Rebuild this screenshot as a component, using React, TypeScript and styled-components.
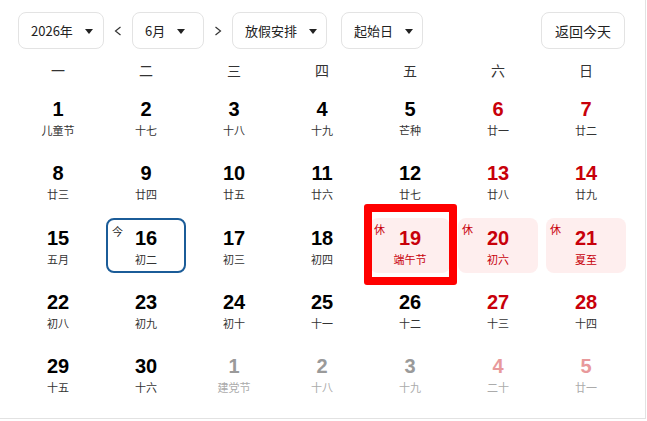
import React from 'react';
import styled, { createGlobalStyle } from 'styled-components';

const GlobalStyle = createGlobalStyle`
  html, body {
    margin: 0;
    padding: 0;
    background: #fff;
  }
  body {
    font-family: "Noto Sans CJK SC", "Noto Sans", sans-serif;
    color: #333;
  }
`;

type DayKind = 'normal' | 'weekend' | 'next' | 'nextWeekend';

interface Day {
  num: number;
  lunar: string;
  kind: DayKind;
  today?: boolean;
  rest?: boolean;
  marked?: boolean;
}

const d = (num: number, lunar: string, kind: DayKind = 'normal', extra: Partial<Day> = {}): Day => ({
  num,
  lunar,
  kind,
  ...extra,
});

const WEEKDAYS = ['一', '二', '三', '四', '五', '六', '日'];

const DAYS: Day[] = [
  d(1, '儿童节'), d(2, '十七'), d(3, '十八'), d(4, '十九'), d(5, '芒种'), d(6, '廿一', 'weekend'), d(7, '廿二', 'weekend'),
  d(8, '廿三'), d(9, '廿四'), d(10, '廿五'), d(11, '廿六'), d(12, '廿七'), d(13, '廿八', 'weekend'), d(14, '廿九', 'weekend'),
  d(15, '五月'), d(16, '初二', 'normal', { today: true }), d(17, '初三'), d(18, '初四'),
  d(19, '端午节', 'weekend', { rest: true, marked: true }), d(20, '初六', 'weekend', { rest: true }), d(21, '夏至', 'weekend', { rest: true }),
  d(22, '初八'), d(23, '初九'), d(24, '初十'), d(25, '十一'), d(26, '十二'), d(27, '十三', 'weekend'), d(28, '十四', 'weekend'),
  d(29, '十五'), d(30, '十六'), d(1, '建党节', 'next'), d(2, '十八', 'next'), d(3, '十九', 'next'), d(4, '二十', 'nextWeekend'), d(5, '廿一', 'nextWeekend'),
];

const numColor: Record<DayKind, string> = {
  normal: '#000',
  weekend: '#c8000a',
  next: '#9a9a9a',
  nextWeekend: '#e8999b',
};

const Page = styled.div`
  width: 645px;
  height: 418px;
  border-right: 1px solid #e2e2e2;
  border-bottom: 1px solid #e2e2e2;
  box-sizing: content-box;
`;

const Toolbar = styled.div`
  display: flex;
  align-items: center;
  padding: 12px 20px 0 18px;
  height: 37px;
`;

const SelectButton = styled.button<{ $w: number }>`
  display: flex;
  align-items: center;
  justify-content: flex-start;
  gap: 12px;
  width: ${p => p.$w}px;
  height: 37px;
  padding: 0 0 0 12px;
  border: 1px solid #e3e3e3;
  border-radius: 8px;
  background: #fff;
  font-family: "Noto Sans CJK SC", sans-serif;
  font-size: 13px;
  color: #222;
  box-sizing: border-box;
  flex-shrink: 0;
`;

const Caret = styled.span`
  width: 0;
  height: 0;
  border-left: 4px solid transparent;
  border-right: 4px solid transparent;
  border-top: 5px solid #222;
  margin-top: 1px;
`;

const ArrowButton = styled.button`
  width: 28px;
  height: 37px;
  display: flex;
  align-items: center;
  justify-content: center;
  border: none;
  background: transparent;
  padding: 0;
  color: #333;
`;

const Spacer = styled.div<{ $w: number }>`
  width: ${p => p.$w}px;
  flex-shrink: 0;
`;

const TodayButton = styled.button`
  margin-left: auto;
  height: 37px;
  padding: 0 13px;
  border: 1px solid #e3e3e3;
  border-radius: 8px;
  background: #fff;
  font-family: "Noto Sans CJK SC", sans-serif;
  font-size: 14px;
  color: #222;
`;

const Grid = styled.div`
  display: grid;
  grid-template-columns: repeat(7, 80px);
  column-gap: 8px;
  padding: 0 0 0 18px;
`;

const WeekRow = styled(Grid)`
  margin-top: 9px;
  height: 24px;
  align-items: center;
`;

const WeekLabel = styled.div`
  text-align: center;
  font-size: 14px;
  line-height: 24px;
  color: #333;
`;

const DayGrid = styled(Grid)`
  margin-top: 7px;
  grid-auto-rows: 55px;
  row-gap: 9.25px;
`;

const Cell = styled.div<{ $today?: boolean; $rest?: boolean }>`
  position: relative;
  display: flex;
  flex-direction: column;
  align-items: center;
  gap: 2px;
  box-sizing: border-box;
  border-radius: 8px;
  background: ${p => (p.$rest ? '#feeeee' : 'transparent')};
  border: ${p => (p.$today ? '2px solid #1b5c98' : 'none')};
  padding-top: ${p => (p.$today ? 7 : 9)}px;
`;

const DayNum = styled.div<{ $color: string }>`
  font-family: "Liberation Sans", Arial, sans-serif;
  font-weight: 700;
  font-size: 20px;
  line-height: 22px;
  color: ${p => p.$color};
`;

const Lunar = styled.div<{ $color: string }>`
  font-size: 11px;
  line-height: 16px;
  color: ${p => p.$color};
`;

const Tag = styled.span<{ $color: string }>`
  position: absolute;
  top: 4px;
  left: 4px;
  font-size: 11px;
  line-height: 14px;
  color: ${p => p.$color};
`;

const Mark = styled.div`
  position: absolute;
  top: -14px;
  left: -6px;
  right: -7px;
  bottom: -12px;
  border: 8px solid #ff0000;
  border-radius: 3px;
  pointer-events: none;
`;

const Chevron = ({ dir }: { dir: 'left' | 'right' }) => (
  <svg width="8" height="10" viewBox="0 0 8 10" fill="none">
    <path
      d={dir === 'left' ? 'M6.5 1 L1.5 5 L6.5 9' : 'M1.5 1 L6.5 5 L1.5 9'}
      stroke="#333"
      strokeWidth="1.2"
      strokeLinejoin="miter"
    />
  </svg>
);

const lunarColor = (day: Day) => {
  if (day.rest) return '#c8000a';
  if (day.kind === 'next' || day.kind === 'nextWeekend') return '#ababab';
  return '#333';
};

export default function App() {
  return (
    <>
      <GlobalStyle />
      <Page>
        <Toolbar>
          <SelectButton $w={86}>2026年<Caret /></SelectButton>
          <ArrowButton><Chevron dir="left" /></ArrowButton>
          <SelectButton $w={72}>6月<Caret /></SelectButton>
          <ArrowButton><Chevron dir="right" /></ArrowButton>
          <SelectButton $w={95}>放假安排<Caret /></SelectButton>
          <Spacer $w={14} />
          <SelectButton $w={82}>起始日<Caret /></SelectButton>
          <TodayButton>返回今天</TodayButton>
        </Toolbar>

        <WeekRow>
          {WEEKDAYS.map(w => (
            <WeekLabel key={w}>{w}</WeekLabel>
          ))}
        </WeekRow>

        <DayGrid>
          {DAYS.map((day, i) => (
            <Cell key={i} $today={day.today} $rest={day.rest}>
              {day.today && <Tag $color="#222">今</Tag>}
              {day.rest && <Tag $color="#c8000a">休</Tag>}
              <DayNum $color={numColor[day.kind]}>{day.num}</DayNum>
              <Lunar $color={lunarColor(day)}>{day.lunar}</Lunar>
              {day.marked && <Mark />}
            </Cell>
          ))}
        </DayGrid>
      </Page>
    </>
  );
}
